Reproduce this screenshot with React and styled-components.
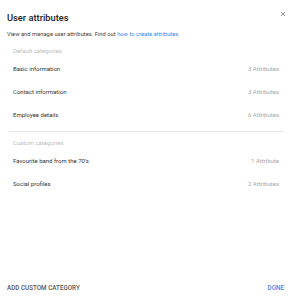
import React from 'react';
import styled, { createGlobalStyle } from 'styled-components';

const GlobalStyle = createGlobalStyle`
  html, body {
    margin: 0;
    padding: 0;
    background: #fff;
  }
  body {
    font-family: Roboto, "Liberation Sans", sans-serif;
  }
`;

export const Dialog = styled.div`
  width: 294px;
  height: 300px;
  box-sizing: border-box;
  display: flex;
  flex-direction: column;
  background: #fff;
`;

export const Header = styled.div`
  display: flex;
  justify-content: space-between;
  align-items: flex-start;
  padding: 12px 8px 0 7px;
`;

export const Title = styled.h1`
  margin: 0;
  font-size: 9.3px;
  line-height: 12px;
  font-weight: 500;
  color: #212121;
`;

export const Close = styled.button`
  border: 0;
  background: none;
  padding: 0;
  margin-top: -1px;
  width: 6px;
  height: 6px;
  display: flex;
  cursor: pointer;
`;

export const Description = styled.p`
  margin: 6px 7px 0;
  font-size: 5.8px;
  line-height: 8px;
  color: #424242;
  a {
    color: #4285f4;
    text-decoration: none;
  }
`;

export const Body = styled.div`
  flex: 1;
  padding: 0 10px 0 9px;
`;

export const Section = styled.section`
  padding: 0 5px 0 4px;
  margin-top: ${p => p.first ? '9px' : '7px'};
`;

export const SectionLabel = styled.div`
  font-size: 6px;
  line-height: 8px;
  color: #bdbdbd;
  margin-bottom: 2px;
`;

export const Row = styled.div`
  display: flex;
  justify-content: space-between;
  align-items: center;
  height: 23px;
  font-size: 6px;
  color: #333;
  cursor: pointer;
`;

export const Count = styled.span`
  color: #a6a6a6;
`;

export const Divider = styled.hr`
  border: 0;
  border-top: 1px solid #e6e6e6;
  margin: 5px 0 0;
`;

export const Footer = styled.div`
  display: flex;
  justify-content: space-between;
  align-items: center;
  padding: 0 10px 8px 7px;
`;

export const TextButton = styled.button`
  border: 0;
  background: none;
  padding: 0;
  font-family: inherit;
  font-size: 6.3px;
  line-height: 8px;
  font-weight: 500;
  text-transform: uppercase;
  color: ${p => p.primary ? '#4285f4' : '#555'};
  cursor: pointer;
`;

const defaults = [
  { name: 'Basic information', count: '3 Attributes' },
  { name: 'Contact information', count: '3 Attributes' },
  { name: 'Employee details', count: '6 Attributes' },
];

const custom = [
  { name: 'Favourite band from the 70\u2019s', count: '1 Attribute' },
  { name: 'Social profiles', count: '2 Attributes' },
];

const CategoryList = ({ label, items, first }) => (
  <Section first={first}>
    <SectionLabel>{label}</SectionLabel>
    {items.map(item => (
      <Row key={item.name}>
        <span>{item.name}</span>
        <Count>{item.count}</Count>
      </Row>
    ))}
  </Section>
);

export default function App() {
  return (
    <>
      <GlobalStyle />
      <Dialog>
        <Header>
          <Title>User attributes</Title>
          <Close aria-label="Close">
            <svg width="6" height="6" viewBox="0 0 6 6">
              <path d="M1 1 L5 5 M5 1 L1 5" stroke="#8a8a8a" strokeWidth="0.9" />
            </svg>
          </Close>
        </Header>
        <Description>
          View and manage user attributes. Find out <a href="#">how to create attributes.</a>
        </Description>
        <Body>
          <CategoryList first label="Default categories" items={defaults} />
          <Divider />
          <CategoryList label="Custom categories" items={custom} />
        </Body>
        <Footer>
          <TextButton>Add custom category</TextButton>
          <TextButton primary>Done</TextButton>
        </Footer>
      </Dialog>
    </>
  );
}
